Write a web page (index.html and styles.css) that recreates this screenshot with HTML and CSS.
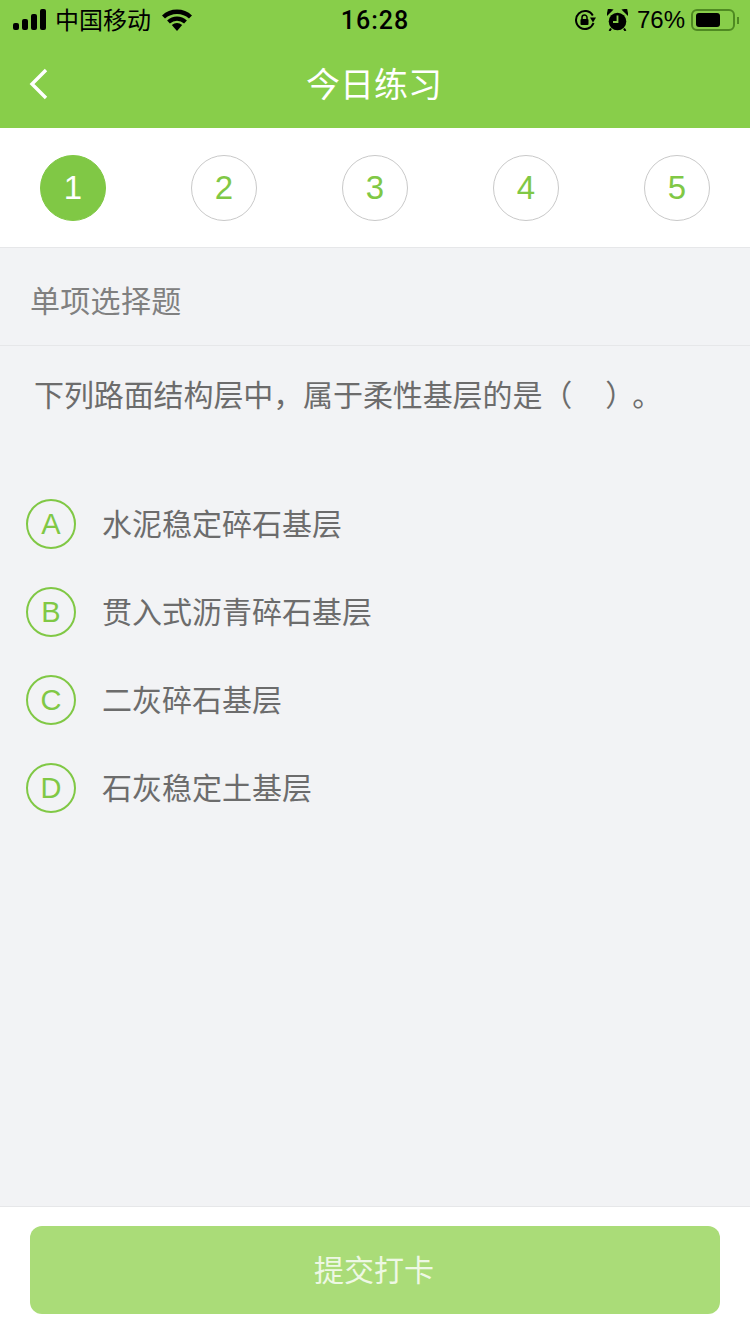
FILE: index.html
```html
<!DOCTYPE html>
<html lang="zh-CN">
<head>
  <meta charset="UTF-8">
  <meta name="viewport" content="width=device-width, initial-scale=1.0">
  <title>今日练习</title>
  <link rel="stylesheet" href="styles.css">
</head>
<body>
  <div class="page">
    <header class="top">
      <div class="status-bar">
        <div class="status-left">
          <svg class="signal" width="34" height="22" viewBox="0 0 34 22">
            <rect x="0" y="14" width="6" height="7" rx="2"/>
            <rect x="9" y="10" width="6" height="11" rx="2"/>
            <rect x="18" y="5" width="6" height="16" rx="2"/>
            <rect x="27" y="0" width="6" height="21" rx="2"/>
          </svg>
          <span class="carrier">中国移动</span>
          <svg class="wifi" width="30" height="22" viewBox="0 0 30 22">
            <path d="M1.500 8C9 1 21 1 28.500 8" fill="none" stroke="#000" stroke-width="4.400"/>
            <path d="M6.500 13C11.500 8.500 18.500 8.500 23.500 13" fill="none" stroke="#000" stroke-width="4.200"/>
            <path d="M9.800 16C13 13.200 17 13.200 20.200 16L15 22Z"/>
          </svg>
        </div>
        <div class="status-time">16:28</div>
        <div class="status-right">
          <svg class="lock" width="22" height="22" viewBox="0 0 22 22">
            <path d="M19.500 14A9 9 0 1 1 18.800 6.500" fill="none" stroke="#000" stroke-width="2"/>
            <path d="M16 8.500L22 8.500L19 13.500Z"/>
            <rect x="6.500" y="10" width="8" height="6" rx="1"/>
            <path d="M8 10V8.500a2.500 2.500 0 0 1 5 0V10" fill="none" stroke="#000" stroke-width="1.500"/>
          </svg>
          <svg class="alarm" width="21" height="22" viewBox="0 0 21 22">
            <circle cx="10.500" cy="12.500" r="8.800"/>
            <path d="M0.500 5.500L5 1L1.500 0.500Z M20.500 5.500L16 1L19.500 0.500Z" stroke="#000" stroke-width="1.500"/>
            <path d="M10.500 6.500V13H6" fill="none" stroke="#88ce4a" stroke-width="1.800"/>
            <path d="M4 19.500L2.500 22M17 19.500L18.500 22" stroke="#000" stroke-width="2"/>
          </svg>
          <span class="battery-pct">76%</span>
          <div class="battery"><div class="battery-level"></div></div>
          <div class="battery-cap"></div>
        </div>
      </div>
      <div class="nav-bar">
        <svg class="back" width="20" height="32" viewBox="0 0 20 32">
          <path d="M17 2L3 16L17 30" fill="none" stroke="#fff" stroke-width="3.400"/>
        </svg>
        <h1 class="nav-title">今日练习</h1>
      </div>
    </header>

    <div class="steps">
      <div class="step step-active">1</div>
      <div class="step">2</div>
      <div class="step">3</div>
      <div class="step">4</div>
      <div class="step">5</div>
    </div>

    <main class="content">
      <div class="q-type">单项选择题</div>
      <p class="q-text">下列路面结构层中，属于柔性基层的是（&nbsp;&nbsp;&nbsp;&nbsp;&nbsp;）<span class="q-end">。</span></p>
      <ul class="options">
        <li class="option"><span class="option-mark">A</span><span class="option-text">水泥稳定碎石基层</span></li>
        <li class="option"><span class="option-mark">B</span><span class="option-text">贯入式沥青碎石基层</span></li>
        <li class="option"><span class="option-mark">C</span><span class="option-text">二灰碎石基层</span></li>
        <li class="option"><span class="option-mark">D</span><span class="option-text">石灰稳定土基层</span></li>
      </ul>
    </main>

    <footer class="bottom">
      <button class="submit">提交打卡</button>
    </footer>
  </div>
</body>
</html>
```

FILE: styles.css
```css
* {
  box-sizing: border-box;
}
body {
  margin: 0;
  font-family: "Noto Sans CJK SC", "Liberation Sans", sans-serif;
  background: #f2f3f5;
}
.page {
  display: flex;
  flex-direction: column;
  width: 750px;
  height: 1334px;
  overflow: hidden;
}

/* header */
.top {
  background: #88ce4a;
  height: 128px;
  flex: none;
}
.status-bar {
  display: flex;
  justify-content: space-between;
  align-items: center;
  height: 40px;
  position: relative;
  padding: 0 11px 0 13px;
  color: #000;
  font-family: "Liberation Sans", "Noto Sans CJK SC", sans-serif;
}
.status-left, .status-right {
  display: flex;
  align-items: center;
}
.carrier {
  font-size: 24px;
  margin-left: 8px;
  padding-bottom: 4px;
  font-family: "Noto Sans CJK SC", sans-serif;
}
.wifi {
  margin-left: 11px;
}
.status-time {
  position: absolute;
  left: 0;
  right: 0;
  text-align: center;
  font-family: "Roboto", sans-serif;
  font-size: 25px;
  font-weight: 500;
  letter-spacing: 1px;
}
.alarm {
  margin-left: 11px;
}
.battery-pct {
  font-size: 24px;
  margin-left: 9px;
}
.battery {
  width: 44px;
  height: 22px;
  margin-left: 6px;
  padding: 2px 3px;
  border: 2px solid #4f8a22;
  border-radius: 6px;
}
.battery-level {
  width: 72%;
  height: 100%;
  background: #000;
  border-radius: 3px;
}
.battery-cap {
  width: 2px;
  height: 7px;
  margin-left: 2px;
  background: #4f8a22;
}
.nav-bar {
  display: flex;
  align-items: center;
  justify-content: center;
  height: 88px;
  position: relative;
}
.back {
  position: absolute;
  left: 29px;
  top: 28px;
}
.nav-title {
  margin: 0 0 0 -2px;
  font-size: 34px;
  font-weight: 400;
  color: #fff;
  padding-bottom: 4px;
}

/* steps */
.steps {
  display: flex;
  justify-content: space-between;
  align-items: center;
  flex: none;
  height: 120px;
  padding: 0 40px;
  background: #fff;
  border-bottom: 1px solid #e6e7e9;
}
.step {
  display: flex;
  align-items: center;
  justify-content: center;
  width: 66px;
  height: 66px;
  border: 1px solid #c9c9c9;
  border-radius: 50%;
  font-family: "Liberation Sans", sans-serif;
  font-size: 33px;
  color: #80c845;
}
.step-active {
  background: #80c845;
  border-color: #80c845;
  color: #fff;
}

/* question */
.content {
  flex: 1;
  min-height: 0;
}
.q-type {
  height: 98px;
  line-height: 102px;
  padding-left: 30px;
  font-size: 30px;
  letter-spacing: 0.3px;
  color: #808080;
  border-bottom: 1px solid #e6e7e9;
}
.q-text {
  margin: 24px 0 0;
  padding-left: 34px;
  font-size: 30px;
  line-height: 46px;
  letter-spacing: -0.1px;
  color: #6c6c6c;
}
.q-end {
  margin-left: 12px;
}
.options {
  list-style: none;
  margin: 64px 0 0;
  padding: 0 0 0 26px;
}
.option {
  display: flex;
  align-items: center;
  gap: 26px;
  height: 88px;
  font-size: 30px;
  color: #6c6c6c;
}
.option-text {
  padding-bottom: 4px;
}
.option-mark {
  display: flex;
  align-items: center;
  justify-content: center;
  width: 50px;
  height: 50px;
  border: 2px solid #80c845;
  border-radius: 50%;
  font-family: "Liberation Sans", sans-serif;
  font-size: 29px;
  color: #80c845;
}

/* submit */
.bottom {
  flex: none;
  height: 128px;
  padding: 19px 30px 0;
  background: #fff;
  border-top: 1px solid #e6e7e9;
}
.submit {
  display: block;
  width: 100%;
  height: 88px;
  padding: 0 2px 4px 0;
  border: none;
  border-radius: 12px;
  background: #aadc78;
  color: #eef8e4;
  font-family: "Noto Sans CJK SC", sans-serif;
  font-size: 30px;
}
```
